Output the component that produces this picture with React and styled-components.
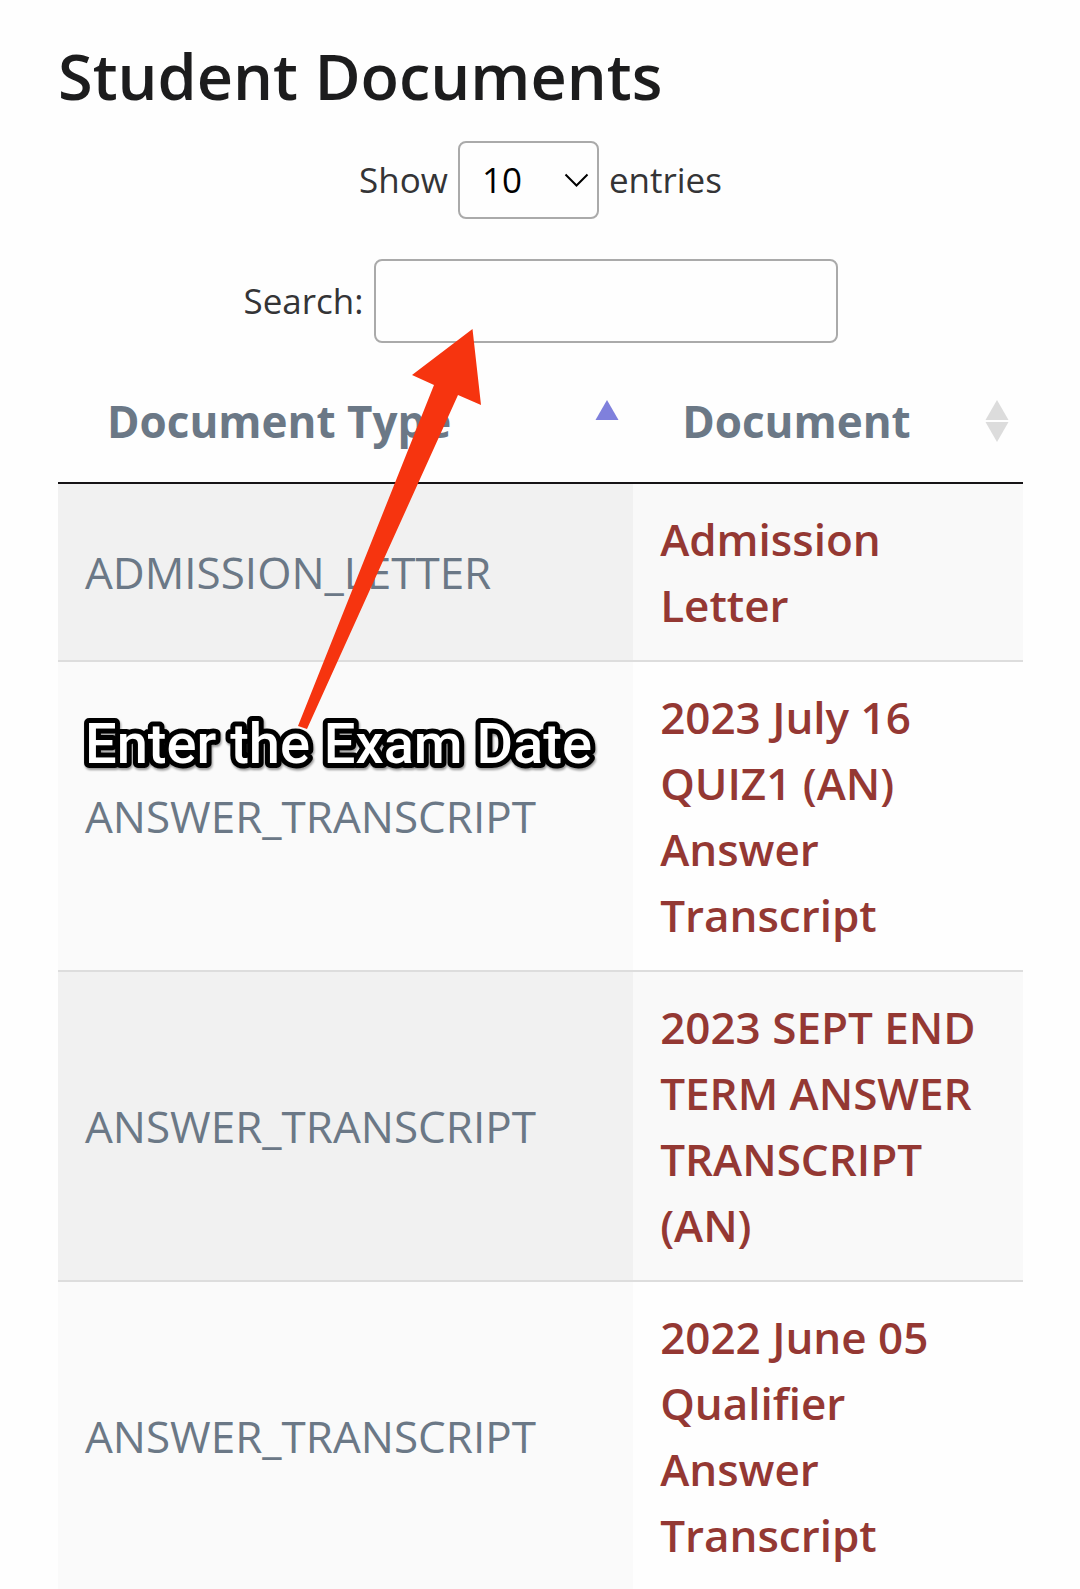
import React from "react";
import styled, { createGlobalStyle } from "styled-components";

const GlobalStyle = createGlobalStyle`
  body {
    margin: 0;
    background: #fefefe;
    color: #343436;
    font-family: "Open Sans", "Noto Sans", sans-serif;
  }
`;

const Page = styled.main`
  position: relative;
  padding: 36px 57px 0 58px;
`;

const Title = styled.h1`
  margin: 0 0 25px;
  font-size: 63px;
  line-height: 80px;
  font-weight: 600;
  color: #1c1c1d;
`;

const Controls = styled.div`
  display: flex;
  flex-direction: column;
  align-items: center;
  gap: 40px;
  margin-bottom: 18px;
`;

const Field = styled.label`
  display: flex;
  align-items: center;
  gap: 10px;
  font-size: 35px;
  line-height: 54px;
`;

const SelectBox = styled.span`
  position: relative;
  display: flex;
`;

const LengthSelect = styled.select`
  appearance: none;
  box-sizing: border-box;
  width: 141px;
  height: 78px;
  padding: 0 22px;
  border: 2px solid #aaa;
  border-radius: 8px;
  background: transparent;
  color: #000;
  font: inherit;
`;

const Chevron = styled.svg`
  position: absolute;
  top: 32px;
  right: 10px;
  pointer-events: none;
`;

const SearchInput = styled.input`
  box-sizing: border-box;
  width: 464px;
  height: 84px;
  padding: 0 14px;
  border: 2px solid #aaa;
  border-radius: 8px;
  background: transparent;
  font: inherit;
`;

const Table = styled.table`
  width: 100%;
  table-layout: fixed;
  border-collapse: separate;
  border-spacing: 0;
  font-size: 44px;
  line-height: 66px;
  color: #6b7886;
`;

const HeadCell = styled.th`
  width: ${(p) => p.$width};
  padding: 0;
  border-bottom: 2px solid #161416;
`;

const SortButton = styled.button`
  display: flex;
  align-items: center;
  justify-content: space-between;
  width: 100%;
  padding: 27px 14px 28px 49px;
  border: 0;
  background: none;
  color: inherit;
  font: inherit;
  text-align: left;
`;

const Row = styled.tr`
  --type-shade: #fafafa;
  --doc-shade: #fefefe;
  &:nth-child(odd) {
    --type-shade: #f1f1f1;
    --doc-shade: #f9f9f9;
  }
  &:not(:first-child) > td {
    border-top: 2px solid #ddd;
  }
`;

const Cell = styled.td`
  padding: 22px 27px;
  vertical-align: middle;
  background: ${(p) => (p.$sorted ? "var(--type-shade)" : "var(--doc-shade)")};
`;

const DocLink = styled.a`
  color: #943833;
  font-weight: 600;
  text-decoration: none;
`;

const Annotation = styled.svg`
  position: absolute;
  top: 320px;
  left: 70px;
  pointer-events: none;
`;

const NoteText = styled.text`
  font-family: Roboto, sans-serif;
  font-size: 56px;
  font-weight: 500;
  fill: #fff;
  stroke: #000;
  stroke-width: 10px;
  stroke-linejoin: round;
  paint-order: stroke;
  filter: drop-shadow(1px 2px 1px rgba(0, 0, 0, 0.4));
`;

const documents = [
  { type: "ADMISSION_LETTER", name: "Admission Letter" },
  { type: "ANSWER_TRANSCRIPT", name: "2023 July 16 QUIZ1 (AN) Answer Transcript" },
  { type: "ANSWER_TRANSCRIPT", name: "2023 SEPT END TERM ANSWER TRANSCRIPT (AN)" },
  { type: "ANSWER_TRANSCRIPT", name: "2022 June 05 Qualifier Answer Transcript" },
];

function SortIcon({ ascending }) {
  return (
    <svg width="24" height="42" viewBox="0 0 24 42" aria-hidden="true">
      <path d="M12 0 23.5 20H.5Z" fill={ascending ? "#7f80dc" : "#dcdcdc"} />
      {!ascending && <path d="M.5 22h23L12 42Z" fill="#dcdcdc" />}
    </svg>
  );
}

export default function App() {
  return (
    <>
      <GlobalStyle />
      <Page>
        <Title>Student Documents</Title>
        <Controls>
          <Field>
            Show
            <SelectBox>
              <LengthSelect defaultValue="10">
                <option>10</option>
                <option>25</option>
                <option>50</option>
                <option>100</option>
              </LengthSelect>
              <Chevron width="25" height="15" viewBox="0 0 25 15" aria-hidden="true">
                <path d="M1.5 1.5 12.5 12.5 23.5 1.5" fill="none" stroke="#000" strokeWidth="2" />
              </Chevron>
            </SelectBox>
            entries
          </Field>
          <Field>
            Search:
            <SearchInput type="search" />
          </Field>
        </Controls>
        <Table>
          <thead>
            <tr>
              <HeadCell $width="59.6%" aria-sort="ascending">
                <SortButton type="button">
                  Document Type
                  <SortIcon ascending />
                </SortButton>
              </HeadCell>
              <HeadCell $width="40.4%">
                <SortButton type="button">
                  Document
                  <SortIcon />
                </SortButton>
              </HeadCell>
            </tr>
          </thead>
          <tbody>
            {documents.map((doc) => (
              <Row key={doc.name}>
                <Cell $sorted>{doc.type}</Cell>
                <Cell>
                  <DocLink href="#">{doc.name}</DocLink>
                </Cell>
              </Row>
            ))}
          </tbody>
        </Table>
        <Annotation width="540" height="470" viewBox="70 320 540 470">
          <NoteText x="85" y="763">
            Enter the Exam Date
          </NoteText>
          <path
            d="M472.5 329 481 405 458 395 307 729 298 726 434 385 412 375Z"
            fill="#f6340f"
          />
        </Annotation>
      </Page>
    </>
  );
}
